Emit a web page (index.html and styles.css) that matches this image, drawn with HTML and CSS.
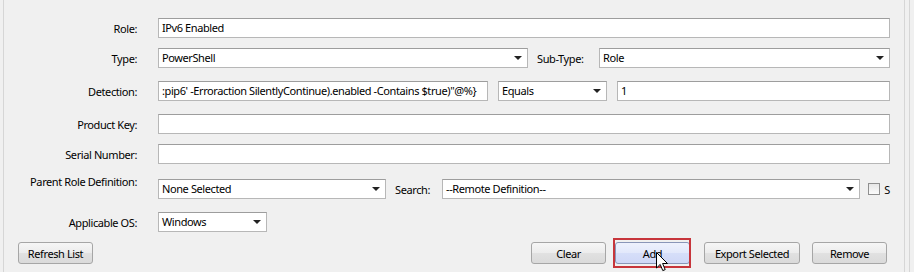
FILE: index.html
```html
<!DOCTYPE html>
<html lang="en">
<head>
    <meta charset="UTF-8">
    <title>Role Definition</title>
    <link rel="stylesheet" href="styles.css">
</head>
<body>
    <div class="window">
        <div class="panel">
            <div class="form">
                <div class="row">
                    <label class="label">Role:</label>
                    <div class="field grow">IPv6 Enabled</div>
                </div>

                <div class="row">
                    <label class="label">Type:</label>
                    <div class="combo w-type">PowerShell<span class="arrow"></span></div>
                    <span class="inline-label w-subtype">Sub-Type:</span>
                    <div class="combo grow">Role<span class="arrow"></span></div>
                </div>

                <div class="row gap-13">
                    <label class="label">Detection:</label>
                    <div class="field w-detect clip">:pip6' -Erroraction SilentlyContinue).enabled -Contains $true)"@%}</div>
                    <div class="combo w-equals spaced">Equals<span class="arrow"></span></div>
                    <div class="field grow spaced">1</div>
                </div>

                <div class="row gap-13">
                    <label class="label">Product Key:</label>
                    <div class="field grow"></div>
                </div>

                <div class="row">
                    <label class="label">Serial Number:</label>
                    <div class="field grow"></div>
                </div>

                <div class="row gap-15 top">
                    <label class="label">Parent Role Definition:</label>
                    <div class="combo w-parent">None Selected<span class="arrow"></span></div>
                    <span class="inline-label w-search">Search:</span>
                    <div class="combo grow">--Remote Definition--<span class="arrow"></span></div>
                    <span class="checkbox"></span>
                    <span class="check-label">S</span>
                </div>

                <div class="row gap-13">
                    <label class="label">Applicable OS:</label>
                    <div class="combo w-os">Windows<span class="arrow"></span></div>
                </div>
            </div>

            <div class="buttons">
                <button class="btn">Refresh List</button>
                <div class="button-group">
                    <button class="btn">Clear</button>
                    <button class="btn btn-hover btn-add">Add
                        <svg class="cursor" width="13" height="20" viewBox="0 0 13 20">
                            <path d="M0.5 0.5 L0.5 16 L4.2 12.4 L6.8 18.6 L9.2 17.6 L6.6 11.5 L11.5 11.5 Z" fill="#fff" stroke="#000" stroke-width="1"/>
                        </svg>
                    </button>
                    <button class="btn w-export">Export Selected</button>
                    <button class="btn">Remove</button>
                </div>
            </div>
        </div>
    </div>
</body>
</html>
```

FILE: styles.css
```css
:root {
    --bg-color: #f0f0f0;
    --text-color: #000;
    --field-border: #b7b7b7;
    --field-border-top: #9d9d9d;
    --panel-line: #d6d6d6;
}

html, body {
    margin: 0;
    padding: 0;
    background-color: var(--bg-color);
}

body {
    font-family: "Noto Sans", "Liberation Sans", sans-serif;
    font-size: 11px;
    letter-spacing: -0.4px;
    color: var(--text-color);
    width: 914px;
    height: 272px;
    overflow: hidden;
}

.window {
    width: 902px;
    height: 272px;
    padding: 0 4px 0 3px;
    border-right: 1px solid var(--panel-line);
}

.panel {
    height: 272px;
    box-sizing: border-box;
    border-left: 1px solid var(--panel-line);
    border-right: 1px solid var(--panel-line);
    padding: 18px 14px 0 0;
}

.form {
    display: flex;
    flex-direction: column;
    gap: 10px;
}

.row {
    display: flex;
    align-items: center;
    height: 20px;
}

.gap-13 {
    margin-top: 3px;
}

.gap-15 {
    margin-top: 5px;
}

.label {
    width: 133px;
    flex-shrink: 0;
    margin-right: 21px;
    text-align: right;
    white-space: nowrap;
}

.row.top .label {
    align-self: flex-start;
    margin-top: -5px;
}

.field,
.combo {
    position: relative;
    height: 20px;
    box-sizing: border-box;
    background: #fff;
    border: 1px solid var(--field-border);
    border-top-color: var(--field-border-top);
    padding: 0 3px;
    line-height: 18px;
    white-space: nowrap;
}

.combo {
    padding-right: 20px;
}

.grow {
    flex: 1;
    min-width: 0;
}

.clip {
    overflow: hidden;
}

.spaced {
    margin-left: 10px;
}

.arrow {
    position: absolute;
    right: 5px;
    top: 7px;
    width: 0;
    height: 0;
    border-left: 4px solid transparent;
    border-right: 4px solid transparent;
    border-top: 4px solid #222;
}

.w-type { width: 370px; }
.w-detect { width: 330px; }
.w-equals { width: 109px; }
.w-parent { width: 228px; }
.w-os { width: 109px; }

.inline-label {
    flex-shrink: 0;
    padding-left: 9px;
    box-sizing: border-box;
    white-space: nowrap;
}

.w-subtype { width: 71px; }
.w-search { width: 56px; }

.checkbox {
    width: 12px;
    height: 12px;
    box-sizing: border-box;
    margin-left: 8px;
    border: 1px solid #8f8f8f;
    background: linear-gradient(#e6e6e6, #fbfbfb);
    flex-shrink: 0;
}

.check-label {
    margin-left: 4px;
}

.buttons {
    display: flex;
    justify-content: space-between;
    align-items: center;
    margin-top: 10px;
    padding-left: 14px;
    padding-right: 3px;
}

.button-group {
    display: flex;
    gap: 12px;
}

.btn {
    position: relative;
    width: 75px;
    height: 22px;
    padding: 0;
    font-family: inherit;
    font-size: 11px;
    letter-spacing: -0.4px;
    color: #000;
    border: 1px solid #a6a6a6;
    border-radius: 3px;
    background: linear-gradient(#f6f6f6 0%, #ececec 50%, #e1e1e1 51%, #dadada 100%);
}

.w-export {
    width: 96px;
    margin-left: 2px;
}

.btn-add {
    margin-left: -3px;
}

.btn-hover {
    border-color: #8a96b8;
    background: linear-gradient(#eef1fd 0%, #e2e8fb 50%, #d6def9 51%, #cfd8f7 100%);
}

.btn-add::after {
    content: '';
    position: absolute;
    top: -5px;
    bottom: -5px;
    left: -3px;
    right: -2px;
    border: 2px solid #c7353b;
}

.cursor {
    position: absolute;
    left: 40px;
    top: 9px;
    z-index: 2;
}
```
